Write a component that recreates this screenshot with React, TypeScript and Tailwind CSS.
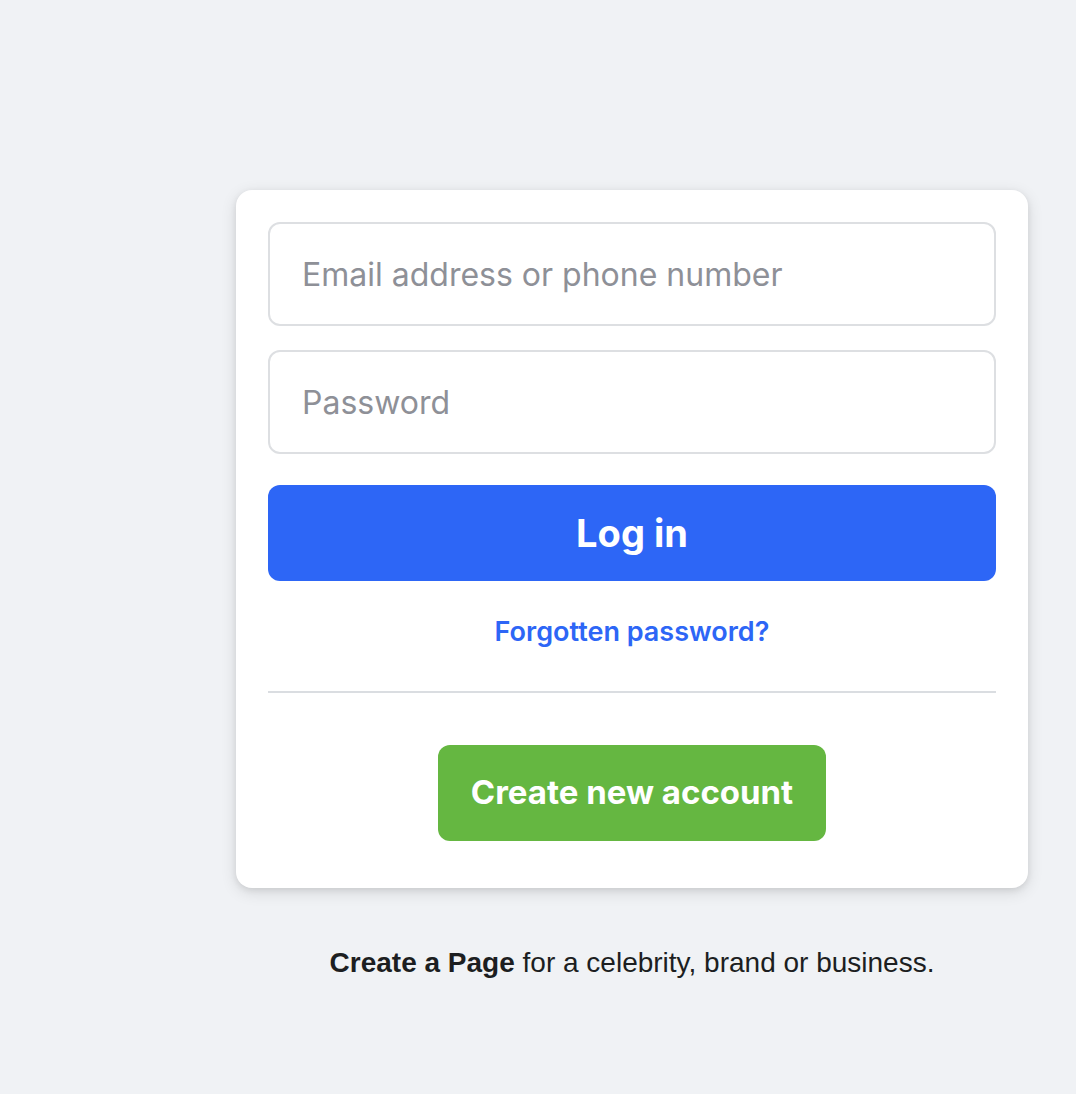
import React from "react";

export default function App() {
  return (
    <div className="min-h-[1094px] w-full bg-[#f0f2f5] pl-[236px] pt-[190px]" style={{ fontFamily: "Inter, 'Noto Sans', sans-serif" }}>
      <div className="w-[792px]">
        <div className="flex flex-col rounded-[16px] bg-white px-[32px] pt-[32px] pb-[47px] shadow-[0_4px_16px_rgba(0,0,0,0.12),0_2px_6px_rgba(0,0,0,0.08)]">
          <input
            type="text"
            placeholder="Email address or phone number"
            className="h-[104px] w-full rounded-[12px] border-2 border-[#dddfe2] px-[32px] text-[32px] text-[#1c1e21] placeholder-[#8e9097] outline-none"
            style={{ fontFamily: "Inter, sans-serif" }}
          />
          <input
            type="password"
            placeholder="Password"
            className="mt-[24px] h-[104px] w-full rounded-[12px] border-2 border-[#dddfe2] px-[32px] text-[32px] text-[#1c1e21] placeholder-[#8e9097] outline-none"
            style={{ fontFamily: "Inter, sans-serif" }}
          />
          <button className="mt-[31px] h-[96px] w-full rounded-[12px] bg-[#2d66f6] text-[38px] font-bold text-white">
            Log in
          </button>
          <div className="mt-[31px] text-center leading-[40px]">
            <a className="text-[27px] font-semibold leading-[40px] text-[#2d66f6]">Forgotten password?</a>
          </div>
          <div className="mt-[36px] h-[2px] w-full bg-[#dadde1]" />
          <div className="mt-[52px] flex justify-center">
            <button className="h-[96px] w-[388px] rounded-[12px] bg-[#65b741] text-[33px] font-bold text-white">
              Create new account
            </button>
          </div>
        </div>
        <p className="mt-[54px] text-center text-[28px] leading-[42px] text-[#1c1e21]" style={{ fontFamily: "'Liberation Sans', Arial, sans-serif" }}>
          <span className="font-bold">Create a Page</span> for a celebrity, brand or business.
        </p>
      </div>
    </div>
  );
}
